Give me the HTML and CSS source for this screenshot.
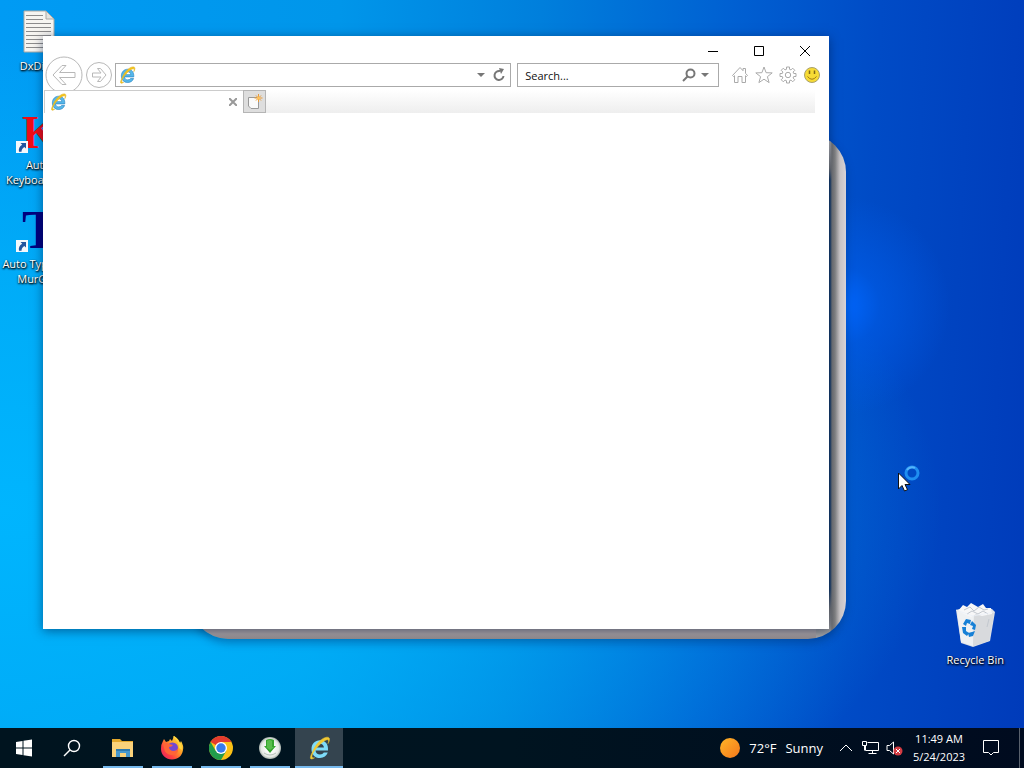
FILE: index.html
```html
<!DOCTYPE html>
<html lang="en">
<head>
  <meta charset="UTF-8">
  <title>Desktop</title>
  <meta name="viewport" content="width=device-width, initial-scale=1.0">
  <link rel="stylesheet" href="styles.css">
</head>
<body>
  <!-- shared icon shapes -->
  <svg class="defs" aria-hidden="true">
    <symbol id="ie" viewBox="0 0 24 24">
      <path d="M20 14.500H8.500C8.800 17 10.500 18.500 13 18.500C14.800 18.500 16 17.800 16.800 16.600H20.800C19.600 20 16.800 22 13 22C8 22 4.500 18.500 4.500 13.200C4.500 8 8 4.300 13 4.300C18.500 4.300 21.500 8.500 21 14.500ZM8.600 11.500H17C16.700 9 15.200 7.700 12.900 7.700C10.500 7.700 9 9.200 8.600 11.500Z" fill="#55b7ea" stroke="#2a84c2" stroke-width=".9"/>
      <path d="M5.500 16C2 22.500 3 24.500 7.500 21.800C3.800 22.500 4.300 19 8 14C13 7.200 19.500 2.500 21.200 4C22 4.700 21.600 6.200 21 7.600C23.300 3.500 23 .9 19.800 1.200C14.800 1.600 8 8.500 5.500 16Z" fill="#f5c518" stroke="#e0b42a" stroke-width=".8"/>
    </symbol>
    <symbol id="ie-light" viewBox="0 0 24 24">
      <path d="M20 14.500H8.500C8.800 17 10.500 18.500 13 18.500C14.800 18.500 16 17.800 16.800 16.600H20.800C19.600 20 16.800 22 13 22C8 22 4.500 18.500 4.500 13.200C4.500 8 8 4.300 13 4.300C18.500 4.300 21.500 8.500 21 14.500ZM8.600 11.500H17C16.700 9 15.200 7.700 12.900 7.700C10.500 7.700 9 9.200 8.600 11.500Z" fill="#7edcf8"/>
      <path d="M5.500 16C2 22.500 3 24.500 7.500 21.800C3.800 22.500 4.300 19 8 14C13 7.200 19.500 2.500 21.200 4C22 4.700 21.600 6.200 21 7.600C23.300 3.500 23 .9 19.800 1.200C14.800 1.600 8 8.500 5.500 16Z" fill="#f0c832" stroke="#f0c832" stroke-width=".5"/>
    </symbol>
    <symbol id="shortcut" viewBox="0 0 12 12">
      <path d="M0 0H12V12H0Z" fill="#f4f8fc"/>
      <path d="M4.500 2H10V7.500L8.300 5.900C6.500 7 5.600 8.500 5.500 10.800H3C2.300 8 3.500 5.300 6.200 3.800Z" fill="#23569f"/>
    </symbol>
  </svg>

  <main class="desktop">
    <div class="monitor"></div>

    <div class="shortcuts">
      <div class="item item-file">
        <svg width="34" height="44" viewBox="0 0 34 44">
          <path d="M3 1H25L33 9V42H3Z" fill="#f6f5f1" stroke="#aaa9a5"/>
          <path d="M25 1V9H33Z" fill="#e3e3df" stroke="#aaa9a5"/>
          <path d="M5 5.500H22M5 9.500H22M5 13.500H30M5 17.500H30M5 21.500H30M5 25.500H30M5 29.500H30M5 33.500H30M5 37.500H30" stroke="#8c8c8c"/>
        </svg>
        <span>DxDiag</span>
      </div>
      <div class="item">
        <div class="letter letter-k">K<svg class="arrow" width="12" height="12"><use href="#shortcut"/></svg></div>
        <span>Auto<br>Keyboard by</span>
      </div>
      <div class="item">
        <div class="letter letter-t">T<svg class="arrow" width="12" height="12"><use href="#shortcut"/></svg></div>
        <span>Auto Typer by<br>MurGee</span>
      </div>
    </div>

    <div class="item recycle">
      <svg width="42" height="46" viewBox="0 0 42 46">
        <path d="M2 8L12 5L38 7L41 10L36 39L19 45L7 41Z" fill="#dce0e6"/>
        <path d="M3 9L20 13L19 44L7 40Z" fill="#eff1f3"/>
        <path d="M20 13L40 10L35 39L19 44Z" fill="#d8dadd"/>
        <path d="M4 9L9 3L13 5L17 1L24 5L29 2L32 6L37 6L38 12L28 14L22 12L17 15L10 12Z" fill="#f7f7f8"/>
        <path d="M10 8L16 5L20 9L25 5L30 8L34 7M13 12L18 9L24 12L29 9L34 12M35 17L33 25" fill="none" stroke="#c3c8cf"/>
        <path d="M2 8L19 14L40 10" fill="none" stroke="#e9f0f8" opacity=".7"/>
        <path d="M9 22L12 17L17 18L16 22L13 21L12 24ZM18 19L22 23L21 28L18 27L19 24L16 23ZM8 25L12 25L12 29L15 31L13 34L9 31ZM21 29L19 34L15 35L14 31L18 30Z" fill="#1680d6"/>
      </svg>
      <span>Recycle Bin</span>
    </div>

    <section class="window" aria-label="Browser">
      <div class="titlebar">
        <button aria-label="Minimize"><svg width="12" height="12"><path d="M1 6.500H11"/></svg></button>
        <button aria-label="Maximize"><svg width="12" height="12"><path d="M1.500 1.500H10.500V10.500H1.500Z"/></svg></button>
        <button aria-label="Close"><svg width="12" height="12"><path d="M1 1L11 11M11 1L1 11"/></svg></button>
      </div>

      <div class="navbar">
        <button class="back" aria-label="Back">
          <svg width="38" height="38" viewBox="0 0 38 38"><circle cx="19" cy="19" r="18"/><path d="M8 19L17 9.500H21L14.500 16.500H30V21.500H14.500L21 28.500H17Z"/></svg>
        </button>
        <button class="forward" aria-label="Forward">
          <svg width="26" height="26" viewBox="0 0 26 26"><circle cx="13" cy="13" r="12.500"/><path d="M20 13L14.500 6.500H11.500L15 11H6.500V15H15L11.500 19.500H14.500Z"/></svg>
        </button>
        <div class="field address">
          <svg width="18" height="18"><use href="#ie"/></svg>
          <input type="text" aria-label="Address">
          <button aria-label="Show addresses"><svg width="8" height="4"><path d="M0 0H8L4 4Z" fill="#777"/></svg></button>
          <button aria-label="Refresh"><svg width="14" height="14" viewBox="0 0 14 14"><path d="M11.500 8A4.500 4.500 0 1 1 8 3.100" fill="none" stroke="#777" stroke-width="2"/><path d="M7 0L12 1L9 6Z" fill="#777"/></svg></button>
        </div>
        <div class="field search">
          <input type="text" aria-label="Search" placeholder="Search...">
          <button aria-label="Go"><svg width="14" height="14" viewBox="0 0 14 14"><circle cx="8.500" cy="5.500" r="4" fill="none" stroke="#777" stroke-width="2"/><path d="M5.500 8.500L1 13" stroke="#777" stroke-width="2"/></svg></button>
          <button aria-label="Search providers"><svg width="8" height="4"><path d="M0 0H8L4 4Z" fill="#777"/></svg></button>
        </div>
        <div class="tools">
          <button aria-label="Home"><svg width="18" height="18" viewBox="0 0 18 18"><path d="M1.500 9.500L9 1.500L12 4.700V2.500H14.500V7.300L16.500 9.500L15.500 10.500L14.500 9.700V16.500H11V10.500H7V16.500H3.500V9.700L2.500 10.500Z"/></svg></button>
          <button aria-label="Favorites"><svg width="18" height="18" viewBox="0 0 18 18"><path d="M9 1L11.100 6.700L17.200 6.900L12.400 10.700L14.100 16.600L9 13.200L3.900 16.600L5.600 10.700L.8 6.900L6.900 6.700Z"/></svg></button>
          <button aria-label="Tools"><svg width="18" height="18" viewBox="0 0 18 18"><path d="M7.500 1H10.500V3.300L12 3.900L13.700 2.200L15.800 4.300L14.100 6L14.700 7.500H17V10.500H14.700L14.100 12L15.800 13.700L13.700 15.800L12 14.100L10.500 14.700V17H7.500V14.700L6 14.100L4.300 15.800L2.200 13.700L3.900 12L3.300 10.500H1V7.500H3.300L3.900 6L2.200 4.300L4.300 2.200L6 3.900L7.500 3.300Z"/><circle cx="9" cy="9" r="2.700"/></svg></button>
          <button aria-label="Send a smile"><svg width="18" height="18" viewBox="0 0 18 18"><circle cx="9" cy="9" r="7.500" fill="#f7db35" stroke="#a9a16c"/><path d="M6.500 4.500V8M11.500 4.500V8" stroke="#80681a" stroke-width="1.500"/><path d="M4.500 10.500Q9 16 13.500 10.500" stroke="#a07a18"/></svg></button>
        </div>
      </div>

      <div class="tabs">
        <div class="tab">
          <svg width="18" height="18"><use href="#ie"/></svg>
          <button aria-label="Close tab"><svg width="8" height="8"><path d="M0 0L8 8M8 0L0 8" stroke="#999" stroke-width="2"/></svg></button>
        </div>
        <button class="new-tab" aria-label="New tab">
          <svg width="16" height="18" viewBox="0 0 16 18"><path d="M1.500 4.500H11.500V15.500H4L1.500 13Z" fill="#fafafa" stroke="#999"/><path d="M11.500 1V9M7.500 5H15.500M9 2.500L14 7.500M14 2.500L9 7.500" stroke="#e99a35"/><circle cx="11.500" cy="5" r="1.500" fill="#ffc45c"/></svg>
        </button>
        <div class="tab-space"></div>
      </div>
    </section>

    <svg class="cursor" width="24" height="28" viewBox="0 0 24 28">
      <circle cx="15" cy="8" r="6" fill="none" stroke="#1f8ef0" stroke-width="3"/>
      <path d="M10 5A6 6 0 0 1 18 3" fill="none" stroke="#57b4fa" stroke-width="2"/>
      <path d="M1.500 8V24L5 20.500L7.500 26L10.500 24.700L8 19.500H13Z" fill="#fff" stroke="#111"/>
    </svg>
  </main>

  <footer class="taskbar">
    <button aria-label="Start"><svg width="18" height="18" viewBox="0 0 18 18"><path d="M1 3L7.500 2V8.500H1ZM8.500 1.800L17 .6V8.500H8.500ZM1 9.500H7.500V16L1 15ZM8.500 9.500H17V17.400L8.500 16.200Z" fill="#fff"/></svg></button>
    <button aria-label="Search"><svg width="18" height="18" viewBox="0 0 18 18"><circle cx="11" cy="7" r="5.500" fill="none" stroke="#fff" stroke-width="1.400"/><path d="M7 11L1 17" stroke="#fff" stroke-width="1.400"/></svg></button>

    <div class="apps">
      <button class="app" aria-label="File Explorer">
        <svg width="24" height="24" viewBox="0 0 24 24"><path d="M1 3H9L11 5H22V10H1Z" fill="#e3a82c"/><path d="M1 6H22V21H1Z" fill="#fad27a"/><path d="M5 13H19V21H15V17H9V21H5Z" fill="#4798cd"/><path d="M5 13H19V15H5Z" fill="#2c79ae"/></svg>
      </button>
      <button class="app" aria-label="Firefox">
        <svg width="24" height="24" viewBox="0 0 24 24">
          <defs><linearGradient id="fox" x1="1" y1="0" x2="0" y2="1"><stop offset="0" stop-color="#fff148"/><stop offset=".4" stop-color="#ffa026"/><stop offset=".7" stop-color="#ff403e"/><stop offset="1" stop-color="#e11c6d"/></linearGradient></defs>
          <path d="M3 5L4 3L6 6L9 5L10 3L12 5L14 0Q19 3 20 7L21 5Q24 10 23 14C22 20 18 23.500 12 23.500S1 19 1 13Q1 8 3 5Z" fill="url(#fox)"/>
          <circle cx="12.500" cy="12" r="5.500" fill="#7548d1"/>
          <path d="M3 7Q7 6 9 8L13 9Q12 11 9 11Q9 14 13 15Q17 15 18 12Q19 19 12 19Q5 19 4 12Z" fill="#ff6537"/>
          <path d="M13 1Q19 5 19 12L22 14Q22 7 19 6Q17 2 14 0Z" fill="#ffd83f"/>
        </svg>
      </button>
      <button class="app" aria-label="Chrome">
        <svg width="24" height="24" viewBox="0 0 24 24"><circle cx="12" cy="12" r="12" fill="#fbc116"/><path d="M12 12L1.600 6A12 12 0 0 1 22.400 6H12Z" fill="#e33b2e"/><path d="M12 12L17.200 15L12 24A12 12 0 0 1 1.600 6L6.800 15Z" fill="#229c4b"/><circle cx="12" cy="12" r="6" fill="#fff"/><circle cx="12" cy="12" r="4.700" fill="#377cec"/></svg>
      </button>
      <button class="app" aria-label="Downloader">
        <svg width="24" height="24" viewBox="0 0 24 24"><defs><radialGradient id="ball"><stop offset=".3" stop-color="#fff"/><stop offset=".8" stop-color="#e6e9e5"/><stop offset="1" stop-color="#a5b0aa"/></radialGradient></defs><circle cx="12" cy="12" r="11" fill="url(#ball)"/><path d="M8 4Q12 2 16 4V10H18L12 17L6 10H8Z" fill="#35a52f"/><path d="M9 5Q12 3 14 5V11H16L12 14L8 11H9Z" fill="#59bd4c"/><path d="M6 17Q12 21 18 17" fill="none" stroke="#b7c2bb"/></svg>
      </button>
      <button class="app active" aria-label="Internet Explorer"><svg width="24" height="24"><use href="#ie-light"/></svg></button>
    </div>

    <div class="tray">
      <button class="weather">
        <svg width="20" height="20"><defs><linearGradient id="sun" x2="1" y2="1"><stop stop-color="#ffb527"/><stop offset="1" stop-color="#f4771c"/></linearGradient></defs><circle cx="10" cy="10" r="10" fill="url(#sun)"/></svg>
        <span>72°F</span><span>Sunny</span>
      </button>
      <button aria-label="Show hidden icons"><svg width="14" height="8"><path d="M1 7L7 1L13 7"/></svg></button>
      <button aria-label="Network"><svg width="17" height="16" viewBox="0 0 17 16"><path d="M5.500 2.500H16.500V10.500H3.500V6M10.500 10.500V13.500M6.500 13.500H14.500M.5 1.500H4.500V5.500H.5ZM2.500 5.500V10.500"/></svg></button>
      <button aria-label="Volume muted"><svg width="17" height="16" viewBox="0 0 17 16"><path d="M1 5.500H3.500L7.500 2V14L3.500 10.500H1Z"/><circle cx="12" cy="11" r="4.500" fill="#d43c43" stroke="none"/><path d="M10 9L14 13M14 9L10 13"/></svg></button>
      <button class="clock"><span>11:49 AM</span><span>5/24/2023</span></button>
      <button class="notices" aria-label="Notifications"><svg width="18" height="18" viewBox="0 0 18 18"><path d="M1.500 1.500H16.500V13.500H11.500L9 16L6.500 13.500H1.500Z"/></svg></button>
      <button class="show-desktop" aria-label="Show desktop"></button>
    </div>
  </footer>
</body>
</html>
```

FILE: styles.css
```css
* {
  box-sizing: border-box;
}
body {
  margin: 0;
  min-height: 100vh;
  display: flex;
  flex-direction: column;
  font-family: "Open Sans", "Noto Sans", sans-serif;
  font-size: 11px;
  background: #0047c4;
}
button, input {
  margin: 0;
  padding: 0;
  border: none;
  background: none;
  font: inherit;
  color: inherit;
}
button {
  display: flex;
  align-items: center;
  justify-content: center;
}
svg {
  display: block;
  flex: none;
}
.defs {
  position: absolute;
  width: 0;
  height: 0;
}

/* desktop */
.desktop {
  position: relative;
  flex: 1;
  overflow: hidden;
  background:
    radial-gradient(circle at 82% 42%, #0067ff 0, rgba(0, 96, 240, 0.500) 40px, rgba(0, 80, 210, 0) 110px),
    radial-gradient(ellipse at 0 70%, rgba(0, 184, 255, 0.900) 0, rgba(0, 180, 250, 0.700) 30%, rgba(0, 176, 255, 0) 65%),
    linear-gradient(93deg, #009bf4 0%, #0096ea 32%, #007fdc 51%, #0060d2 69%, #004bc6 83%, #003bba 100%);
}
.monitor {
  position: absolute;
  inset: 134px 178px 89px 190px;
  border-radius: 38px;
  background:
    linear-gradient(to top, #8f898b 0, #a8a1a2 5px, #a8a1a2 12px, transparent 14px) left bottom / calc(100% - 30px) 100% no-repeat,
    linear-gradient(to left, #d8d3d6 0, #c8c4c6 6px, #858585 11px, #777 14px, transparent 16px),
    linear-gradient(#c4c6c4 0, #aaa 14px, #777 34px, #153b68 46px, #153b68 calc(100% - 50px), #777 calc(100% - 30px), #aaa);
  box-shadow: 0 4px 8px rgba(0, 50, 110, 0.400);
}
.shortcuts {
  position: absolute;
  top: 10px;
  left: 0;
  width: 76px;
  display: flex;
  flex-direction: column;
}
.item {
  display: flex;
  flex-direction: column;
  align-items: center;
  height: 99px;
  color: #fff;
  line-height: 15px;
  text-align: center;
  white-space: nowrap;
  text-shadow: 0 1px 2px #000, 1px 1px 2px #000;
}
.item-file {
  gap: 4px;
}
.letter {
  position: relative;
  width: 44px;
  height: 48px;
  padding-left: 6px;
  font: bold 46px/48px "Liberation Serif", serif;
  text-align: left;
  text-shadow: none;
}
.letter-k {
  color: #f00d16;
}
.letter-t {
  color: #00007f;
  font-size: 54px;
  line-height: 44px;
}
.arrow {
  position: absolute;
  left: 0;
  bottom: 4px;
}
.recycle {
  position: absolute;
  right: 20px;
  bottom: 27px;
  gap: 4px;
}
.cursor {
  position: absolute;
  left: 897px;
  top: 465px;
}

/* browser window */
.window {
  position: absolute;
  inset: 36px 195px 99px 43px;
  display: flex;
  flex-direction: column;
  background: #fff;
  box-shadow: 0 2px 10px rgba(0, 20, 60, 0.500);
}
.titlebar {
  display: flex;
  justify-content: flex-end;
  height: 27px;
  padding-right: 1px;
}
.titlebar button {
  width: 46px;
  height: 30px;
}
.titlebar path {
  fill: none;
  stroke: #000;
}
.navbar {
  display: flex;
  align-items: center;
  height: 24px;
  padding: 0 8px 0 2px;
}
.back, .forward {
  margin-right: 3px;
}
.back svg, .forward svg {
  fill: #fff;
  stroke: #b8b8b8;
}
.field {
  display: flex;
  align-items: center;
  height: 24px;
  border: 1px solid #aaa;
  background: #fff;
}
.field input {
  flex: 1;
  min-width: 0;
  height: 22px;
  outline: none;
}
.field input::placeholder {
  color: #111;
  opacity: 1;
}
.address {
  flex: 1;
  gap: 7px;
  margin-right: 6px;
  padding: 0 4px 0 2px;
}
.search {
  width: 26%;
  gap: 5px;
  padding: 0 9px 0 7px;
}
.tools {
  display: flex;
  gap: 6px;
  margin-left: 12px;
}
.tools svg {
  fill: none;
  stroke: #aaa;
}
.tabs {
  display: flex;
  height: 23px;
  margin-top: 3px;
  padding: 0 14px 0 1px;
}
.tab {
  display: flex;
  align-items: center;
  justify-content: space-between;
  width: 199px;
  padding: 0 6px 0 4px;
  border-top: 1px solid #ccc;
  border-left: 1px solid #ccc;
  background: #fff;
  z-index: 1;
}
.new-tab {
  width: 23px;
  border: 1px solid #b5b5b5;
  background: #dedede;
}
.tab-space {
  flex: 1;
  background: linear-gradient(#fff, #eee);
}

/* taskbar */
.taskbar {
  display: flex;
  height: 40px;
  background: linear-gradient(90deg, #00141f, #001420 50%, #000b1f);
  color: #fff;
}
.taskbar > button {
  width: 48px;
}
.apps {
  display: flex;
  gap: 1px;
  margin-left: 3px;
}
.app {
  position: relative;
  width: 48px;
}
.app::after {
  content: "";
  position: absolute;
  bottom: 0;
  left: 4px;
  right: 4px;
  height: 2px;
  background: #76b9ed;
}
.active {
  background: #34444f;
}
.active::after {
  left: 0;
  right: 0;
}
.tray {
  display: flex;
  align-items: stretch;
  margin-left: auto;
}
.tray button {
  min-width: 24px;
}
.tray svg {
  fill: none;
  stroke: #fff;
}
.tray .weather {
  gap: 9px;
  margin-right: 11px;
  font-size: 13px;
}
.weather svg {
  stroke: none;
}
.tray .clock {
  flex-direction: column;
  width: 66px;
  line-height: 18px;
}
.tray .notices {
  width: 38px;
}
.tray .show-desktop {
  min-width: 5px;
  margin-left: 9px;
  border-left: 1px solid #59616d;
}
```
